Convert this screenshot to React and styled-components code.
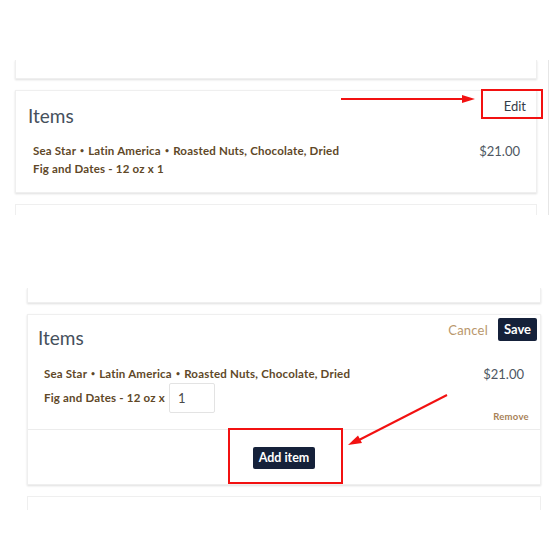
import React from 'react';
import styled, { createGlobalStyle } from 'styled-components';

const Global = createGlobalStyle`
  html, body { margin: 0; padding: 0; background: #fff; }
  body { font-family: Lato, "Open Sans", "Liberation Sans", sans-serif; }
  * { box-sizing: border-box; }
`;

const Page = styled.div`
  position: relative;
  width: 550px;
  height: 549px;
  overflow: hidden;
  background: #fff;
`;

const Shot = styled.section`
  display: flex;
  flex-direction: column;
  gap: 11px;
  margin-top: ${p => p.$top}px;
  padding-left: ${p => p.$left}px;
  padding-right: ${p => p.$right}px;
  width: ${p => p.$width}px;
  height: ${p => p.$height}px;
  overflow: hidden;
  border-right: ${p => (p.$edge ? '1px solid #e6e6e6' : 'none')};
`;

const Card = styled.div`
  flex: none;
  background: #fff;
  border: 1px solid #efefef;
  box-shadow: 0 1px 2px rgba(0, 0, 0, 0.13);
  height: ${p => p.$h}px;
  display: flex;
  flex-direction: column;
`;

const Sliver = styled(Card)`
  border-top: ${p => (p.$cut === 'top' ? 'none' : '1px solid #efefef')};
  border-bottom: ${p => (p.$cut === 'bottom' ? 'none' : '1px solid #efefef')};
  box-shadow: ${p => (p.$cut === 'bottom' ? 'none' : '0 1px 2px rgba(0,0,0,0.13)')};
`;

const Header = styled.div`
  display: flex;
  justify-content: space-between;
  align-items: flex-start;
  padding: ${p => p.$pad};
`;

const Title = styled.h2`
  margin: ${p => p.$mt}px 0 0 0;
  font-size: 19px;
  line-height: 22px;
  font-weight: 400;
  color: #46505c;
`;

const EditLink = styled.span`
  margin-top: 7px;
  font-size: 13px;
  line-height: 16px;
  color: #343c47;
`;

const Actions = styled.div`
  display: flex;
  align-items: center;
  gap: 10px;
`;

const Cancel = styled.span`
  font-size: 13px;
  color: #b9976c;
  letter-spacing: 0.2px;
`;

const DarkButton = styled.button`
  border: none;
  border-radius: 2px;
  background: #15213a;
  color: #fff;
  font-family: Lato, "Open Sans", sans-serif;
  font-weight: 700;
  font-size: ${p => p.$fs}px;
  height: ${p => p.$h}px;
  padding: 0 ${p => p.$px}px;
  line-height: ${p => p.$h}px;
`;

const ItemRow = styled.div`
  display: flex;
  justify-content: space-between;
  align-items: flex-start;
  margin-top: ${p => p.$mt}px;
  padding: ${p => p.$pad};
`;

const ItemText = styled.div`
  font-size: 11.5px;
  font-weight: 700;
  line-height: ${p => p.$lh}px;
  color: #604828;
  letter-spacing: 0.2px;
`;

const Dot = styled.span`
  font-size: 7px;
  vertical-align: 2px;
  padding: 0 1px;
`;

const QtyLine = styled.div`
  display: flex;
  align-items: center;
  height: 30px;
`;

const Qty = styled.input`
  width: 46px;
  height: 30px;
  margin-left: 4px;
  border: 1px solid #e3e3e3;
  border-radius: 2px;
  padding: 0 0 0 8px;
  font-family: Lato, "Open Sans", sans-serif;
  font-size: 13px;
  color: #4a4a4a;
  background: #fff;
`;

const RightCol = styled.div`
  display: flex;
  flex-direction: column;
  align-items: flex-end;
`;

const Price = styled.span`
  font-size: 13px;
  line-height: 18px;
  color: #4e5762;
  margin-top: 1px;
`;

const Remove = styled.span`
  margin-top: 28px;
  margin-right: -5px;
  font-size: 9.5px;
  line-height: 12px;
  font-weight: 700;
  color: #a88257;
  letter-spacing: 0.3px;
`;

const Footer = styled.div`
  flex: 1;
  display: flex;
  align-items: center;
  justify-content: center;
  border-top: 1px solid #ececec;
  padding-top: 2px;
`;

const RedBox = styled.div`
  position: absolute;
  left: ${p => p.$x}px;
  top: ${p => p.$y}px;
  width: ${p => p.$w}px;
  height: ${p => p.$h}px;
  border: 2px solid #f21111;
`;

const Overlay = styled.svg`
  position: absolute;
  inset: 0;
  pointer-events: none;
`;

const Line1 = () => (
  <>
    Sea Star <Dot>•</Dot> Latin America <Dot>•</Dot> Roasted Nuts, Chocolate, Dried
  </>
);

export default function App() {
  return (
    <>
      <Global />
      <Page>
        <Shot $top={60} $left={15} $right={11} $width={549} $height={155} $edge>
          <Sliver $h={19} $cut="top" />
          <Card $h={103}>
            <Header $pad="0 10px 0 12px">
              <Title $mt={14}>Items</Title>
              <EditLink>Edit</EditLink>
            </Header>
            <ItemRow $mt={14} $pad="0 16px 0 17px">
              <ItemText $lh={18}>
                <Line1 />
                <br />
                Fig and Dates - 12 oz x 1
              </ItemText>
              <Price>$21.00</Price>
            </ItemRow>
          </Card>
          <Sliver $h={20} $cut="bottom" />
        </Shot>

        <Shot $top={73} $left={27} $right={9} $width={550} $height={222}>
          <Sliver $h={15} $cut="top" />
          <Card $h={171}>
            <Header $pad="3px 3px 0 10px">
              <Title $mt={9}>Items</Title>
              <Actions>
                <Cancel>Cancel</Cancel>
                <DarkButton $fs={13} $h={23} $px={6}>Save</DarkButton>
              </Actions>
            </Header>
            <ItemRow $mt={15} $pad="0 16px 6px 16px">
              <div>
                <ItemText $lh={18}><Line1 /></ItemText>
                <QtyLine>
                  <ItemText $lh={18}>Fig and Dates - 12 oz x</ItemText>
                  <Qty defaultValue="1" />
                </QtyLine>
              </div>
              <RightCol>
                <Price>$21.00</Price>
                <Remove>Remove</Remove>
              </RightCol>
            </ItemRow>
            <Footer>
              <DarkButton $fs={12.5} $h={22} $px={6}>Add item</DarkButton>
            </Footer>
          </Card>
          <Sliver $h={20} $cut="bottom" />
        </Shot>

        <RedBox $x={481} $y={89} $w={62} $h={30} />
        <RedBox $x={228} $y={428} $w={115} $h={56} />
        <Overlay width="550" height="549" viewBox="0 0 550 549">
          <line x1="341" y1="99" x2="464" y2="99" stroke="#f21111" strokeWidth="2" />
          <polygon points="475,99 462,95 462,103" fill="#f21111" />
          <line x1="447" y1="395" x2="359" y2="440" stroke="#f21111" strokeWidth="2" />
          <polygon points="348,445 358,435.5 362,443" fill="#f21111" />
        </Overlay>
      </Page>
    </>
  );
}
